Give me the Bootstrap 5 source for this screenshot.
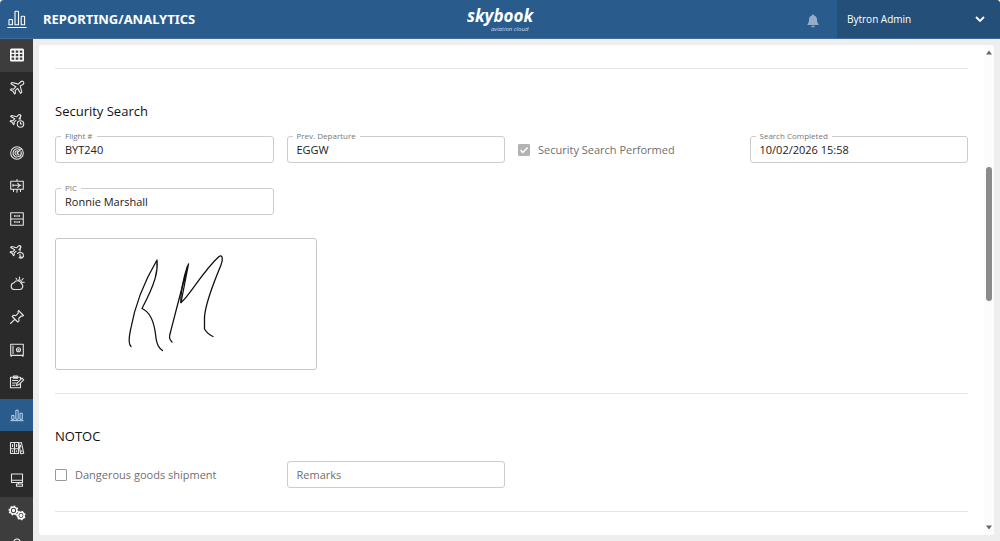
<!DOCTYPE html>
<html lang="en">
<head>
<meta charset="utf-8">
<meta name="viewport" content="width=device-width, initial-scale=1">
<title>Reporting/Analytics</title>
<link href="https://cdn.jsdelivr.net/npm/bootstrap@5.3.0/dist/css/bootstrap.min.css" rel="stylesheet">
<style>
  body { font-family: "Open Sans", "Noto Sans", sans-serif; font-size: 11px; line-height: 16px; color: #212121; background: #fff; }
  .shell { background: #eee; border-radius: 4px 4px 0 0; overflow: hidden; }
  .topbar { background: #295b8d; height: 39px; border-bottom: 1px solid #416c98; color: #fff; }
  .brand-icon { width: 33px; }
  .page-title { font-family: "Noto Sans", sans-serif; font-size: 13px; line-height: 20px; font-weight: 700; padding-left: 10px; }
  .logo { font-style: italic; }
  .logo-main { font-size: 17px; line-height: 20px; font-weight: 700; }
  .logo-sub { font-size: 6px; line-height: 6px; color: #cddbe9; padding-left: 24px; }
  .bar-side { flex: 1 1 0; }
  .bell { color: #94adc6; width: 48px; }
  .user-btn { background: #244f78; color: #fff; width: 163px; font-size: 10px; padding: 0 15px 0 10px; }
  .side { width: 33px; background: #2a2a2a; }
  .side a { flex: 1 1 0; min-height: 0; color: #e4e4e4; overflow: hidden; }
  .side a.lit { background: #3d3d3d; color: #fff; }
  .side a.current { background: #295b8d; color: #bcdcf5; }
  .side a.cut { flex-grow: .35; }
  .ico { width: 16px; height: 16px; flex: none; fill: none; stroke: currentColor; stroke-width: 1.1; stroke-linejoin: round; stroke-linecap: round; }
  .ico-lg { width: 20px; height: 20px; }
  .ico-sm { width: 14px; height: 14px; }
  .work { padding: 6px; min-width: 0; }
  .panel { background: #fff; border-radius: 3px; }
  .sheet { padding: 23px 16px 0; }
  .sheet section { padding: 32px 0 23px; }
  .rule { border-top: 1px solid #e4e4e4; opacity: 1; margin: 0; }
  h2 { font-size: 13px; line-height: 20px; font-weight: 400; color: #111; margin: 0 0 15px; }
  .fields { --bs-gutter-x: 13px; --bs-gutter-y: 25px; }
  .fld { position: relative; }
  .fld input { display: block; height: 27px; width: 100%; border: 1px solid #ccc; border-radius: 3px; padding: 0 9px; font-size: 11px; color: #212121; background: #fff; }
  .fld input::placeholder { color: #707070; opacity: 1; }
  .fld label { position: absolute; top: -6px; left: 6px; padding: 0 4px; background: #fff; font-size: 8px; line-height: 12px; color: #777; }
  .tick { height: 27px; color: #707070; gap: 8px; }
  .tick input { appearance: none; width: 12px; height: 12px; margin: 0; border: 1px solid #999; border-radius: 1px; background: #fff; }
  .tick input:checked { border-color: #b3b3b3; background: #b3b3b3 url("data:image/svg+xml,%3Csvg xmlns='http://www.w3.org/2000/svg' viewBox='0 0 10 10'%3E%3Cpath d='M1.5 5l2.3 2.4L8.6 2.4' fill='none' stroke='white' stroke-width='1.5'/%3E%3C/svg%3E"); }
  .sign { width: 262px; max-width: 100%; border: 1px solid #c6c6c6; border-radius: 3px; margin-top: 23px; }
  .scroll { width: 10px; background: #fcfcfc; }
  .thumb { width: 6px; border-radius: 3px; background: #8b8b8b; flex: 133 1 0; }
  .above { flex: 110 1 0; }
  .below { flex: 222 1 0; }
</style>
</head>
<body>
<svg class="d-none" aria-hidden="true">
  <symbol id="plane" viewBox="0 0 16 16"><path d="M14.3 1.700c-.8-.8-2-.5-2.800.300L9.400 4.100 3.100 2.500 1.900 3.700l5 3-2.300 2.500-2.300-.4-1 1 2.700 1.500 1.500 2.700 1-1-.4-2.300 2.500-2.300 3 5 1.200-1.200-1.600-6.300L14 4.500c.8-.8 1.100-2 .3-2.800z"/></symbol>
  <symbol id="plane-small" viewBox="0 0 16 16"><path d="M11.500 2c-.7-.7-1.600-.4-2.200.2L7.700 3.800 2.700 2.500l-1 1 4 2.300-1.900 2-1.900-.3-.8.8 2.200 1.200L4.500 11.700l.8-.8L5 9.100l2-1.800M11.200 6.200 9.900 5.800 11.300 4.200c.6-.6.9-1.500.2-2.200z"/></symbol>
  <symbol id="bars" viewBox="0 0 16 16"><path d="M1 14.500h14M2 12.500v-4h2.600v4zM6.700 12.500V2.500h2.600v10zM11.400 12.500V6H14v6.500z"/></symbol>
</svg>
<div class="shell vh-100 d-flex flex-column">
  <header class="topbar d-flex align-items-stretch flex-shrink-0">
    <div class="bar-side d-flex align-items-center">
      <div class="brand-icon d-flex justify-content-center"><svg class="ico ico-lg" viewBox="0 0 20 20"><path d="M.8 18.500h18.400M2 15.800v-4.600q0-.7.700-.7h2q.7 0 .7.700v4.600zM8 15.800V3q0-.8.800-.8h1.900q.8 0 .8.800v12.800zM14.200 15.800V8q0-.7.700-.7h2q.7 0 .7.700v7.800z"/></svg></div>
      <h1 class="page-title m-0">REPORTING/ANALYTICS</h1>
    </div>
    <div class="logo d-flex flex-column justify-content-center"><span class="logo-main">skybook</span><span class="logo-sub">aviation cloud</span></div>
    <div class="bar-side d-flex justify-content-end">
      <button class="btn p-0 border-0 bell" aria-label="Notifications"><svg width="12" height="14" viewBox="0 0 12 14" fill="currentColor"><path d="M6 .5c.6 0 1 .4 1 1 2 .4 3 2 3 4 0 2.500.5 3.500 1.500 4.500v1H.5v-1C1.500 9 2 8 2 5.500c0-2 1-3.600 3-4 0-.6.400-1 1-1zM4.300 11.700h3.400c0 1-.7 1.600-1.700 1.600s-1.700-.6-1.700-1.600z"/></svg></button>
      <button class="btn user-btn rounded-0 border-0 d-flex align-items-center justify-content-between"><span>Bytron Admin</span><svg width="10" height="7" viewBox="0 0 10 7" fill="none" stroke="#fff" stroke-width="1.800"><path d="M1 1l4 4 4-4"/></svg></button>
    </div>
  </header>
  <div class="d-flex flex-grow-1" style="min-height:0">
    <nav class="side d-flex flex-column flex-shrink-0" aria-label="Modules">
      <a href="#" aria-label="Grid" class="lit d-flex align-items-center justify-content-center"><svg class="ico" viewBox="0 0 16 16"><path fill="currentColor" stroke="none" fill-rule="evenodd" d="M2.500 1.500h11q1.500 0 1.500 1.500v10q0 1.500-1.500 1.500h-11Q1 14.500 1 13V3q0-1.500 1.500-1.500zM2.600 3.500v2.200h2.600V3.500zm4.100 0v2.200h2.600V3.500zm4.100 0v2.200h2.600V3.500zM2.600 7v2.200h2.600V7zm4.100 0v2.200h2.600V7zm4.100 0v2.200h2.600V7zM2.600 10.500v2.200h2.600v-2.200zm4.100 0v2.200h2.600v-2.200zm4.100 0v2.200h2.600v-2.200z"/></svg></a>
      <a href="#" aria-label="Flights" class="d-flex align-items-center justify-content-center"><svg class="ico"><use href="#plane"/></svg></a>
      <a href="#" aria-label="Flight times" class="d-flex align-items-center justify-content-center"><svg class="ico" viewBox="0 0 16 16"><use href="#plane-small"/><circle cx="11.500" cy="11" r="3.200"/><path d="M11.500 9.300V11h1.500"/></svg></a>
      <a href="#" aria-label="Radar" class="d-flex align-items-center justify-content-center"><svg class="ico" viewBox="0 0 16 16"><circle cx="8" cy="8" r="6.300"/><path d="M12.300 3.800 8 8l2 2M10.500 4.300A4.300 4.300 0 1 0 8 12.300M9 6.100A2.100 2.100 0 1 0 8 10.100M12 6.500c.6 2 .2 4-1.200 5.200l-2-.2"/></svg></a>
      <a href="#" aria-label="Briefing" class="d-flex align-items-center justify-content-center"><svg class="ico" viewBox="0 0 16 16"><path d="M1.700 3.300h12.600v8H1.700zM8 1.500v1.800M4.500 11.300v2.200M11.500 11.300v2.200M8 11.300v3M4 7.300h8M8.800 5.300l2 2-2 2M4 6.300v2"/></svg></a>
      <a href="#" aria-label="Drawers" class="d-flex align-items-center justify-content-center"><svg class="ico" viewBox="0 0 16 16"><path d="M1.700 1.700h12.600v12.600H1.700zM1.700 8h12.600M5.500 5h5M5.500 11h5M5.500 4.500v.8M10.500 4.500v.8M5.500 10.500v.8M10.500 10.500v.8"/></svg></a>
      <a href="#" aria-label="Flight fuel" class="d-flex align-items-center justify-content-center"><svg class="ico" viewBox="0 0 16 16"><use href="#plane-small"/><path d="M8.500 9.500 11 8l3 1.500.5 3-2 1.800-2.500-.5M11 10v3h2"/></svg></a>
      <a href="#" aria-label="Weather" class="d-flex align-items-center justify-content-center"><svg class="ico" viewBox="0 0 16 16"><path d="M5 13.500h5.500a3.200 3.200 0 0 0 1.800-5.900A4 4 0 0 0 5 6.800a3.400 3.400 0 0 0 0 6.700zM8.600 4.700a2.600 2.600 0 0 1 4.200 2.900M10.500 1v1.500M14.200 2.500l-1 1.100M15.300 6.300h-1.200M7 2.300l.8 1.100"/></svg></a>
      <a href="#" aria-label="Pinned" class="d-flex align-items-center justify-content-center"><svg class="ico" viewBox="0 0 16 16"><path d="M9.500 1.500l5 5-1.300.7-1-.2-2.500 2.500.3 2.300-1.300 1.200-5.500-5.500 1.200-1.200 2.400.3L9.300 4.100l-.3-1.300zM5.700 10.300 1.500 14.500"/></svg></a>
      <a href="#" aria-label="Safe" class="d-flex align-items-center justify-content-center"><svg class="ico" viewBox="0 0 16 16"><path d="M1.700 2.200h12.600v11.200H1.700zM4 4v7.500M13.800 13.500v1M2.200 13.500v1"/><circle cx="9.500" cy="7.800" r="2"/><circle cx="9.500" cy="7.800" r=".4"/></svg></a>
      <a href="#" aria-label="Forms" class="d-flex align-items-center justify-content-center"><svg class="ico" viewBox="0 0 16 16"><path d="M11.500 9v4.800h-10V3.300h10V5M4.500 2h4v2.300h-4zM3.500 6.500h5M3.500 9h3.500M3.500 11.300h2.500M7.500 11.500l.6-2.300 5-5 1.600 1.600-5 5z"/></svg></a>
      <a href="#" aria-label="Reporting" aria-current="page" class="current d-flex align-items-center justify-content-center"><svg class="ico ico-sm"><use href="#bars"/></svg></a>
      <a href="#" aria-label="Library" class="d-flex align-items-center justify-content-center"><svg class="ico" viewBox="0 0 16 16"><path d="M1.500 2.500h4v11h-4zM5.500 2.500h4v11h-4zM9.700 3l2.700-.5 2.300 10.700-3 .5zM1.500 8.700h8M3.500 4.500v2M7.500 4.500v2M11.300 5l.4 2M3.500 10.800v.8M7.500 10.800v.8M12.700 10.800l.1.700"/></svg></a>
      <a href="#" aria-label="Display" class="d-flex align-items-center justify-content-center"><svg class="ico" viewBox="0 0 16 16"><path d="M2.500 2h11v8.500h-11zM2.500 8.300h11M9.500 10.500V12M7.500 12h6v2.300h-6z"/></svg></a>
      <a href="#" aria-label="Settings" class="lit d-flex align-items-center justify-content-center"><svg class="ico ico-lg" viewBox="0 0 20 20"><g stroke-width="1.500"><circle cx="6.500" cy="7.500" r="3.400"/><circle cx="6.500" cy="7.500" r=".9"/><circle cx="14" cy="12.500" r="3.200"/><circle cx="14" cy="12.500" r=".9"/></g><path stroke-width="1.400" stroke-dasharray="1.500 1.870" stroke-linecap="butt" d="M2.200 7.500a4.300 4.300 0 1 1 8.600 0 4.300 4.300 0 1 1-8.600 0M10 12.500a4 4 0 1 1 8 0 4 4 0 1 1-8 0"/></svg></a>
      <a href="#" aria-label="Account" class="cut lit d-flex align-items-start justify-content-center"><svg class="ico" viewBox="0 0 16 16"><circle cx="8" cy="12" r="3"/></svg></a>
    </nav>
    <div class="work flex-grow-1 d-flex">
      <div class="panel flex-grow-1 d-flex overflow-hidden">
        <main class="sheet flex-grow-1 overflow-hidden">
          <hr class="rule">
          <section>
            <h2>Security Search</h2>
            <div class="row fields">
              <div class="col-3"><div class="fld"><input id="flight" type="text" value="BYT240"><label for="flight">Flight #</label></div></div>
              <div class="col-3"><div class="fld"><input id="dep" type="text" value="EGGW"><label for="dep">Prev. Departure</label></div></div>
              <div class="col-3"><div class="tick d-flex align-items-center"><input id="done" type="checkbox" checked disabled><label for="done">Security Search Performed</label></div></div>
              <div class="col-3"><div class="fld"><input id="when" type="text" value="10/02/2026 15:58"><label for="when">Search Completed</label></div></div>
              <div class="col-3"><div class="fld"><input id="pic" type="text" value="Ronnie Marshall"><label for="pic">PIC</label></div></div>
            </div>
            <div class="sign"><svg class="d-block w-100" viewBox="0 0 260 130" role="img" aria-label="Signature" fill="none" stroke="#111" stroke-width="1.300" stroke-linejoin="round" stroke-linecap="round"><path d="M75 107.500C72 105 73 98 74.500 91 78 71 85 48 101 21 102 32 100 43 86 69.500 94 73 98 83 99.500 95 100.500 106 103 109 106.500 111.500M116 103C113 100 113 98 114.500 93 121 68 126 48 132.500 25L125 63.500C133 58 146 33 163 17.500 167 15 167 21 165 26 155 50 149 70 148.500 78V90C151 94 153 96 157 97.500"/><path d="M131.500 27C128 37 124 55 125 63.500"/></svg></div>
          </section>
          <hr class="rule">
          <section>
            <h2>NOTOC</h2>
            <div class="row fields">
              <div class="col-3"><div class="tick d-flex align-items-center"><input id="dg" type="checkbox"><label for="dg">Dangerous goods shipment</label></div></div>
              <div class="col-3"><div class="fld"><input type="text" placeholder="Remarks" aria-label="Remarks"></div></div>
            </div>
          </section>
          <hr class="rule">
        </main>
        <div class="scroll d-flex flex-column align-items-center py-1 flex-shrink-0" aria-hidden="true">
          <svg width="6" height="8" viewBox="0 0 6 8" fill="#666"><path d="M0 5.500 3 1.500l3 4z"/></svg>
          <div class="above"></div><div class="thumb"></div><div class="below"></div>
          <svg width="6" height="8" viewBox="0 0 6 8" fill="#666"><path d="M0 2.500h6l-3 4z"/></svg>
        </div>
      </div>
    </div>
  </div>
</div>
<script src="https://cdn.jsdelivr.net/npm/bootstrap@5.3.0/dist/js/bootstrap.bundle.min.js"></script>
</body>
</html>
